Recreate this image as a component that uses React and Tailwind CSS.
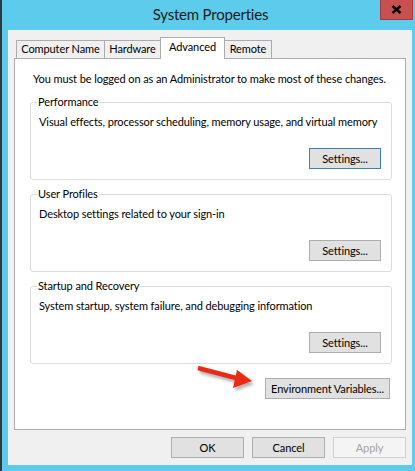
import React from "react";

const font = "font-['Lato',Arial,sans-serif]";

function Btn({ children, className = "" }) {
  return (
    <button
      className={`h-[21px] border bg-[#e1e1e1] text-[11px] leading-[14px] text-black whitespace-nowrap ${className}`}
    >
      {children}
    </button>
  );
}

function Group({ title, desc, first, className = "" }) {
  return (
    <fieldset
      className={`w-[362px] flex flex-col border border-[#dcdcdc] rounded-[3px] pl-[6px] pr-[10px] pt-[6px] pb-[10px] ${className}`}
    >
      <legend className="px-[1px] leading-[14px]">{title}</legend>
      <p className="ml-[2px] leading-[14px]">{desc}</p>
      <Btn
        className={`self-end mt-[19px] w-[72px] ${
          first ? "border-[#3c7fb1]" : "border-[#adadad]"
        }`}
      >
        Settings...
      </Btn>
    </fieldset>
  );
}

function Tab({ label, selected, className = "" }) {
  return (
    <div
      className={`border border-b-0 border-[#acacac] text-center leading-[14px] ${
        selected
          ? "relative z-10 h-[22px] -mb-[1px] bg-white pt-[2px]"
          : "h-[18px] bg-[#f0f0f0] pt-[1px]"
      } ${className}`}
    >
      {label}
    </div>
  );
}

export default function App() {
  return (
    <div
      className={`w-[415px] h-[471px] flex bg-[#5dcbec] text-[11px] tracking-[-0.1px] whitespace-nowrap text-black ${font}`}
    >
      <div className="w-[2px] h-full bg-[#2c3a40]" />
      <div className="flex-1 flex flex-col">
        {/* title bar */}
        <div className="h-[30px] grid grid-cols-[33px_1fr_33px] pl-[6px] pr-[2px]">
          <div />
          <div className="text-center text-[15px] tracking-[-0.2px] leading-[18px] pt-[5px] text-[#1b1b1b]">
            System Properties
          </div>
          <div className="h-[20px] bg-[#c75050] border border-t-0 border-[#9e3b3b] flex items-center justify-center">
            <svg width="11" height="9" viewBox="0 0 11 9">
              <path d="M1.5 1 L9.5 8 M9.5 1 L1.5 8" stroke="#000" strokeWidth="2.4" strokeLinecap="butt" />
            </svg>
          </div>
        </div>
        {/* client */}
        <div className="ml-[6px] w-[404px] h-[435px] bg-[#f0f0f0] px-[6px] pt-[7px] flex flex-col">
          {/* tabs */}
          <div className="h-[21px] flex items-end pl-[2px]">
            <Tab label="Computer Name" className="w-[89px]" />
            <Tab label="Hardware" className="w-[57px] -ml-[1px]" />
            <Tab label="Advanced" selected className="w-[65px] -ml-[1px]" />
            <Tab label="Remote" className="w-[48px] -ml-[1px]" />
          </div>
          {/* panel */}
          <div className="w-[392px] border border-[#adadad] bg-white pl-[15px] pt-[13px] pb-[30px] flex flex-col">
            <p className="ml-[3px] leading-[14px]">
              You must be logged on as an Administrator to make most of these changes.
            </p>
            <Group
              first
              className="mt-[9px]"
              title="Performance"
              desc="Visual effects, processor scheduling, memory usage, and virtual memory"
            />
            <Group
              className="mt-[7px]"
              title="User Profiles"
              desc="Desktop settings related to your sign-in"
            />
            <Group
              className="mt-[7px]"
              title="Startup and Recovery"
              desc="System startup, system failure, and debugging information"
            />
            <div className="relative w-[362px] mt-[14px] flex justify-end pr-[2px]">
              <svg
                className="absolute left-[164px] top-[-14px]"
                width="66"
                height="34"
                viewBox="0 0 66 34"
              >
                <defs>
                  <filter id="sh" x="-20%" y="-40%" width="140%" height="180%">
                    <feGaussianBlur stdDeviation="1.6" />
                  </filter>
                </defs>
                <g transform="translate(2 3)" opacity="0.45" filter="url(#sh)" fill="#555" stroke="#555">
                  <line x1="4" y1="4" x2="44" y2="14.5" strokeWidth="4.5" />
                  <polygon points="43,6 58,17 39,24" stroke="none" />
                </g>
                <g fill="#ec2a14" stroke="#ec2a14">
                  <line x1="4" y1="4" x2="44" y2="14.5" strokeWidth="4.5" />
                  <polygon points="43,6 58,17 39,24" stroke="none" />
                </g>
              </svg>
              <Btn className="w-[125px] border-[#adadad]">Environment Variables...</Btn>
            </div>
          </div>
          {/* bottom buttons */}
          <div className="mt-[7px] w-[392px] flex justify-end gap-[8px]">
            <Btn className="w-[73px] border-[#adadad]">OK</Btn>
            <Btn className="w-[73px] border-[#adadad]">Cancel</Btn>
            <button className="h-[21px] w-[73px] border border-[#d0d0d0] bg-[#f4f4f4] text-[11px] leading-[14px] text-[#a3a3a3]">
              Apply
            </button>
          </div>
        </div>
      </div>
    </div>
  );
}
